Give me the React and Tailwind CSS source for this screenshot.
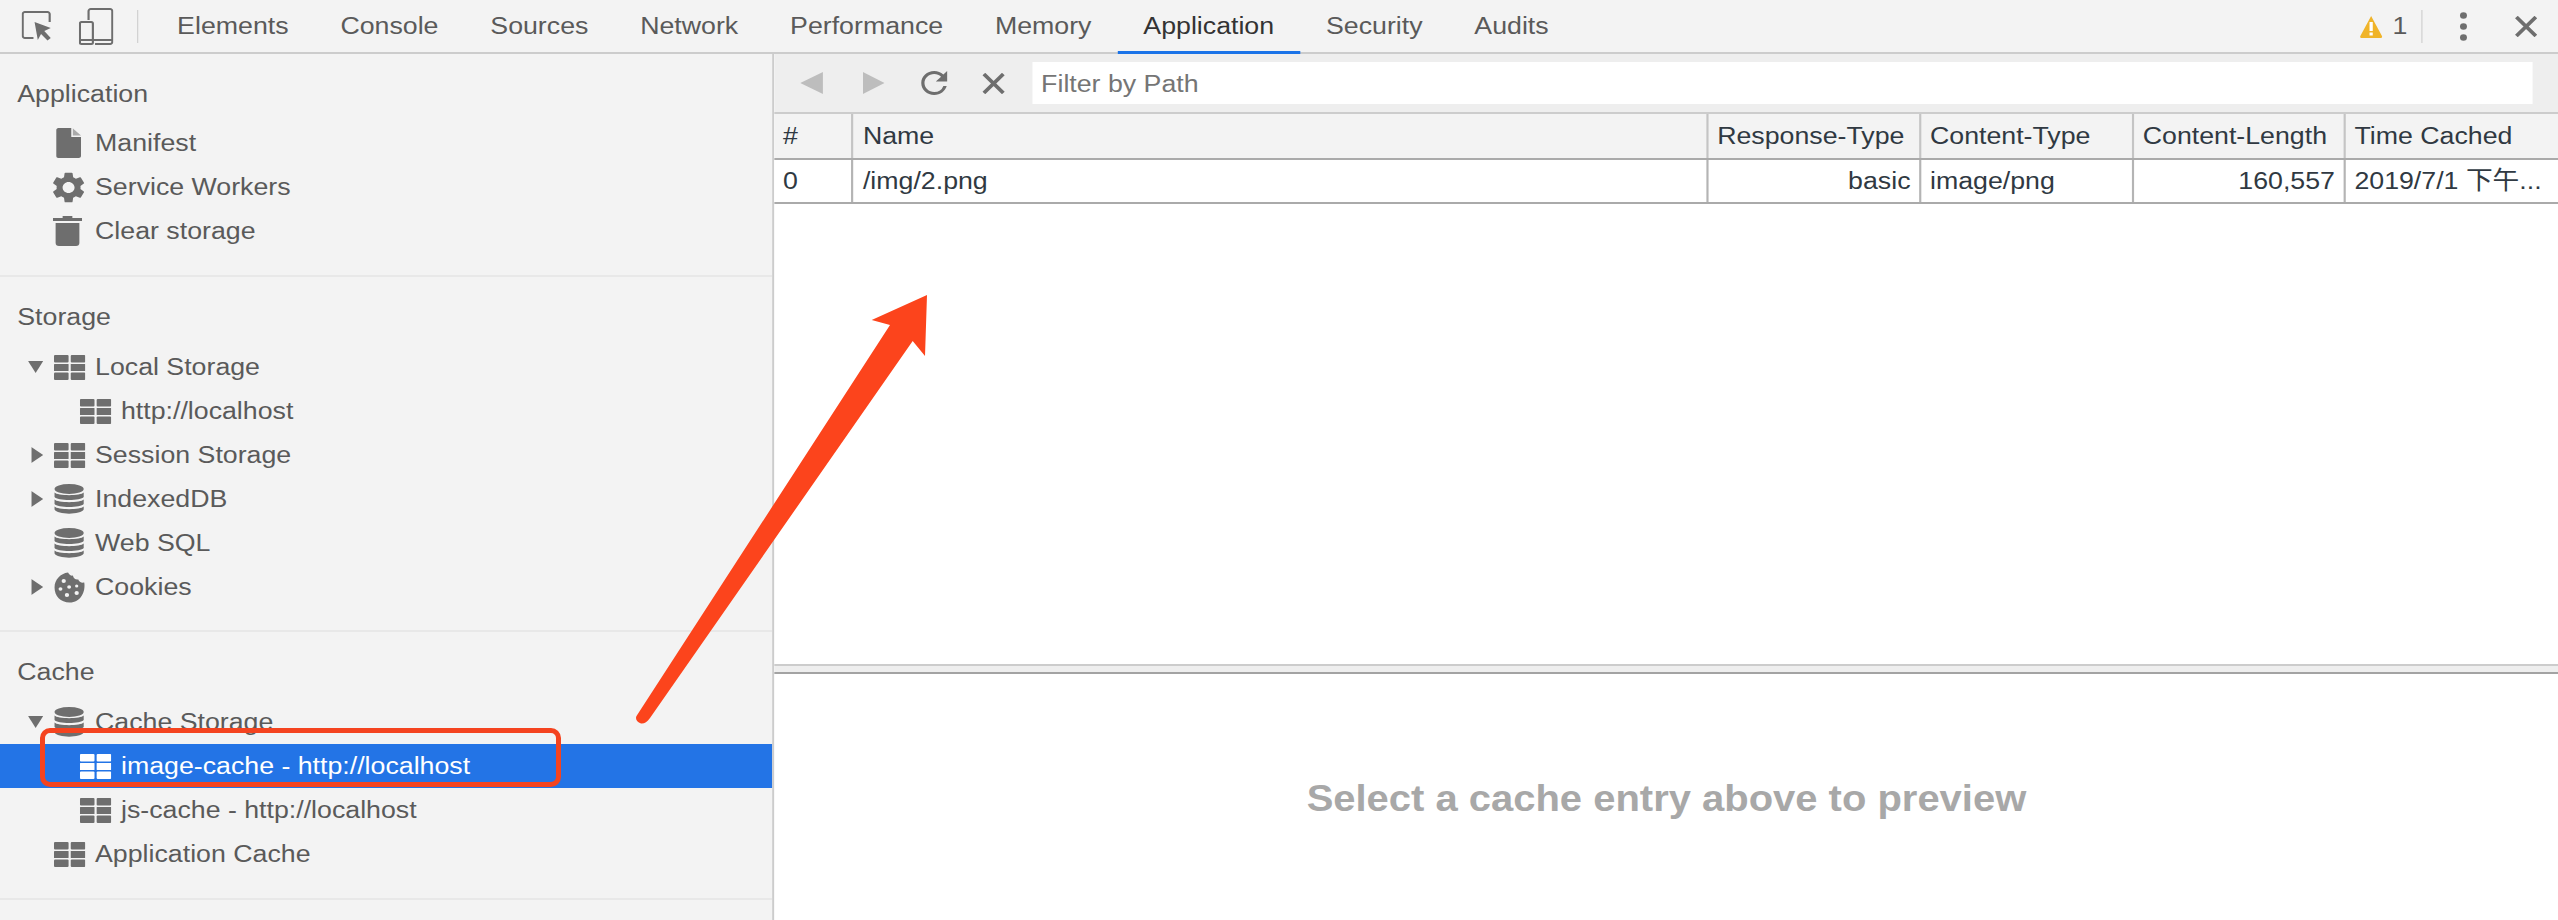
import { MdRefresh, MdSettings } from "react-icons/md";

const TABS = ["Elements", "Console", "Sources", "Network", "Performance", "Memory", "Application", "Security", "Audits"];

function GridIcon({ className = "text-[#6e6e6e]" }) {
  return (
    <svg width="29" height="25" viewBox="0 0 29 25" className={className} fill="currentColor">
      <rect x="0" y="0" width="13.5" height="7.5" rx="1" />
      <rect x="15.5" y="0" width="13.5" height="7.5" rx="1" />
      <rect x="0" y="9" width="13.5" height="7" rx="0.5" />
      <rect x="15.5" y="9" width="13.5" height="7" rx="0.5" />
      <rect x="0" y="17.5" width="13.5" height="7.5" rx="1" />
      <rect x="15.5" y="17.5" width="13.5" height="7.5" rx="1" />
    </svg>
  );
}

function DbIcon() {
  return (
    <svg width="28" height="30" viewBox="0 0 28 30" className="text-[#6e6e6e]" fill="currentColor">
      <ellipse cx="14" cy="5" rx="13.5" ry="5" />
      <path d="M0.5 8.5C3 12 25 12 27.500 8.500V13C25 17 3 17 0.500 13Z" />
      <path d="M0.5 15.500C3 19 25 19 27.500 15.500V20C25 24 3 24 0.500 20Z" />
      <path d="M0.5 22.500C3 26 25 26 27.500 22.500V25.500C25 31 3 31 0.500 25.500Z" />
    </svg>
  );
}

function CookieIcon() {
  return (
    <svg width="29" height="31" viewBox="0 0 29 31" className="text-[#6e6e6e]">
      <path
        fill="currentColor"
        d="M13 0.500C14 3 16 4 17.500 3.500C18 6.500 20 8 22.500 7.500C23 10 25.500 11 28 10.500C29.500 20 24.500 30.500 14.500 30.500C6 30.500 0.500 24 0.500 15.500C0.500 7.500 6 1.500 13 0.500Z"
      />
      <g fill="#f3f3f3">
        <circle cx="9" cy="9" r="2" />
        <circle cx="6" cy="17" r="1.800" />
        <circle cx="14" cy="15" r="1.800" />
        <circle cx="21" cy="14" r="1.500" />
        <circle cx="12" cy="23" r="2" />
        <circle cx="21" cy="21" r="2" />
      </g>
    </svg>
  );
}

function FileIcon() {
  return (
    <svg width="23" height="30" viewBox="0 0 23 30" className="text-[#6e6e6e]" fill="currentColor">
      <path d="M2 0H14V9H23V28C23 29 22 30 21 30H2C1 30 0 29 0 28V2C0 1 1 0 2 0Z" />
      <path d="M15.500 0.500L23 7.500H15.500Z" opacity="0.55" />
    </svg>
  );
}

function TrashIcon() {
  return (
    <svg width="27" height="30" viewBox="0 0 27 30" className="text-[#6e6e6e]" fill="currentColor">
      <path d="M9 0H18V2H27V5H0V2H9Z" />
      <path d="M2.500 7H24.500V27C24.500 28.800 23.300 30 21.500 30H5.500C3.700 30 2.500 28.800 2.500 27Z" />
    </svg>
  );
}

function Caret({ open }) {
  if (open) {
    return (
      <svg width="14" height="12" viewBox="0 0 14 12" className="ml-[2px] text-[#6e6e6e]" fill="currentColor">
        <path d="M0 0H14L7 12Z" />
      </svg>
    );
  }
  return (
    <svg width="11" height="16" viewBox="0 0 11 16" className="ml-[5px] text-[#6e6e6e]" fill="currentColor">
      <path d="M0 0L11 8L0 16Z" />
    </svg>
  );
}

function TreeRow({ depth = 1, caret, icon, label, selected = false }) {
  return (
    <div
      className={`flex h-[44px] items-center whitespace-nowrap ${depth === 2 ? "pl-12" : "pl-6"} ${
        selected ? "bg-[#2374e6] text-white" : ""
      }`}
    >
      <span className="flex w-[26px] shrink-0 items-center">
        {caret === "open" && <Caret open />}
        {caret === "closed" && <Caret />}
      </span>
      <span className="flex w-[38px] shrink-0 items-center">{icon}</span>
      <span>{label}</span>
    </div>
  );
}

function SideSection({ title, children, rowsClass = "mt-[6px] pb-[21px] border-b-2 border-[#e8e8e8]" }) {
  return (
    <section className="pt-[18px]">
      <div className="flex h-[44px] items-center pl-4">{title}</div>
      <div className={rowsClass}>{children}</div>
    </section>
  );
}

function Sidebar() {
  return (
    <aside className="h-full w-[717px] shrink-0 overflow-hidden border-r-2 border-[#cccccc] bg-[#f3f3f3]">
      <SideSection title="Application" rowsClass="mt-[5px] pb-[22px] border-b-2 border-[#e8e8e8]">
        <TreeRow icon={<span className="ml-[2px]"><FileIcon /></span>} label="Manifest" />
        <TreeRow icon={<MdSettings className="-ml-[5px] text-[#6e6e6e]" size={37} />} label="Service Workers" />
        <TreeRow icon={<span className="-ml-[1px]"><TrashIcon /></span>} label="Clear storage" />
      </SideSection>
      <SideSection title="Storage">
        <TreeRow caret="open" icon={<GridIcon />} label="Local Storage" />
        <TreeRow depth={2} icon={<GridIcon />} label="http://localhost" />
        <TreeRow caret="closed" icon={<GridIcon />} label="Session Storage" />
        <TreeRow caret="closed" icon={<DbIcon />} label="IndexedDB" />
        <TreeRow icon={<DbIcon />} label="Web SQL" />
        <TreeRow caret="closed" icon={<CookieIcon />} label="Cookies" />
      </SideSection>
      <SideSection title="Cache" rowsClass="mt-[6px] pb-[22px] border-b-2 border-[#e8e8e8]">
        <TreeRow caret="open" icon={<DbIcon />} label="Cache Storage" />
        <TreeRow depth={2} selected icon={<GridIcon className="text-white" />} label="image-cache - http://localhost" />
        <TreeRow depth={2} icon={<GridIcon />} label="js-cache - http://localhost" />
        <TreeRow icon={<GridIcon />} label="Application Cache" />
      </SideSection>
    </aside>
  );
}

function TopBar() {
  return (
    <header className="flex h-[54px] shrink-0 items-stretch border-b-2 border-[#cccccc] bg-[#f3f3f3] text-[#5a5a5a]">
      <div className="flex w-[140px] shrink-0 items-center pl-[20px]">
        <svg width="28" height="30" viewBox="0 0 28 30" fill="none">
          <path d="M11 27H3C2 27 1 26 1 25V3C1 2 2 1 3 1H24C25 1 26 2 26 3V11" stroke="#6e6e6e" strokeWidth="2" />
          <path d="M12 11L27 17L21 20L27 27L24 29.500L18 23L15 29Z" fill="#6e6e6e" />
        </svg>
        <svg width="32" height="37" viewBox="0 0 32 37" fill="none" className="ml-[25px]">
          <path d="M9 12V3C9 2 10 1 11 1H29C30 1 31 2 31 3V34C31 35 30 36 29 36H15" stroke="#6e6e6e" strokeWidth="2" />
          <rect x="1" y="14" width="12" height="22" rx="1.500" stroke="#6e6e6e" strokeWidth="2" />
          <path d="M1 32H13M13 32H31" stroke="#6e6e6e" strokeWidth="2" />
        </svg>
        <div className="ml-[22px] h-[33px] w-[1px] bg-[#cccccc]" />
      </div>
      {TABS.map((tab) => (
        <div
          key={tab}
          className={`-mb-[2px] flex items-center whitespace-nowrap border-b-[3px] px-6 ${
            tab === "Application" ? "border-[#1a73e8] text-[#333333]" : "border-transparent"
          }`}
        >
          {tab}
        </div>
      ))}
      <div className="ml-auto flex items-center pr-[19px]">
        <svg width="21" height="23" viewBox="0 0 21 23">
          <path d="M10.500 1L20.500 21C21 22 20.500 23 19.500 23H1.500C0.500 23 0 22 0.500 21Z" fill="#f0b429" />
          <rect x="9" y="7" width="3" height="9" fill="#fff" />
          <rect x="9" y="17.500" width="3" height="3" fill="#fff" />
        </svg>
        <span className="ml-[9px]">1</span>
        <div className="ml-[13px] h-[33px] w-[1px] bg-[#cccccc]" />
        <svg width="8" height="29" viewBox="0 0 8 29" className="ml-[34px]" fill="#6e6e6e">
          <circle cx="4" cy="3.500" r="3.200" />
          <circle cx="4" cy="14.500" r="3.200" />
          <circle cx="4" cy="25.500" r="3.200" />
        </svg>
        <svg width="22" height="21" viewBox="0 0 22 21" className="ml-[43px]" stroke="#6e6e6e" strokeWidth="3.500">
          <path d="M2 1L20 20M20 1L2 20" />
        </svg>
      </div>
    </header>
  );
}

function FilterBar() {
  return (
    <div className="flex h-[60px] shrink-0 items-center border-b-2 border-[#cccccc] bg-[#eeeeee] pl-[24px] pr-[24px]">
      <svg width="21" height="22" viewBox="0 0 21 22" fill="#bdbdbd">
        <path d="M21 0V22L0 11Z" />
      </svg>
      <svg width="20" height="22" viewBox="0 0 20 22" className="ml-[37px]" fill="#bdbdbd">
        <path d="M0 0V22L20 11Z" />
      </svg>
      <MdRefresh className="ml-[28px] text-[#6e6e6e]" size={36} />
      <svg width="22" height="21" viewBox="0 0 22 21" className="ml-[26px]" stroke="#6e6e6e" strokeWidth="3.500">
        <path d="M2 1L20 20M20 1L2 20" />
      </svg>
      <div className="ml-[25px] flex h-[42px] flex-1 items-center bg-white pl-2 pt-[1px] text-[#757575]">Filter by Path</div>
    </div>
  );
}

function CacheTable() {
  const cols = "grid grid-cols-[73px_792px_197px_197px_196px_1fr]";
  return (
    <div className="text-[#303942]">
      <div className={`${cols} h-[46px] border-b-2 border-[#aaaaaa] bg-[#f3f3f3]`}>
        <div className="flex items-center border-r-2 border-[#c4c4c4] pl-2">#</div>
        <div className="flex items-center border-r-2 border-[#c4c4c4] pl-[9px]">Name</div>
        <div className="flex items-center border-r-2 border-[#c4c4c4] pl-2">Response-Type</div>
        <div className="flex items-center border-r-2 border-[#c4c4c4] pl-2">Content-Type</div>
        <div className="flex items-center border-r-2 border-[#c4c4c4] pl-2">Content-Length</div>
        <div className="flex items-center pl-2">Time Cached</div>
      </div>
      <div className={`${cols} h-[44px] border-b-2 border-[#aaaaaa] bg-white`}>
        <div className="flex items-center border-r-2 border-[#b4b4b4] pl-2">0</div>
        <div className="flex items-center border-r-2 border-[#b4b4b4] pl-[9px]">/img/2.png</div>
        <div className="flex items-center justify-end border-r-2 border-[#b4b4b4] pr-2">basic</div>
        <div className="flex items-center border-r-2 border-[#b4b4b4] pl-2">image/png</div>
        <div className="flex items-center justify-end border-r-2 border-[#b4b4b4] pr-2">160,557</div>
        <div className="flex items-center overflow-hidden whitespace-nowrap pl-2">2019/7/1 下午...</div>
      </div>
    </div>
  );
}

function MainPanel() {
  return (
    <main className="flex h-full min-w-0 flex-1 flex-col bg-white">
      <FilterBar />
      <div className="h-[550px] shrink-0">
        <CacheTable />
      </div>
      <div className="h-[10px] shrink-0 border-y-2 border-t-[#cccccc] border-b-[#a3a3a3] bg-[#eeeeee]" />
      <div className="flex flex-1 items-center justify-center pt-[3px] text-[37px] font-bold text-[#a8a8a8]">
        Select a cache entry above to preview
      </div>
    </main>
  );
}

export default function App() {
  return (
    <div className="relative h-[920px] w-full overflow-hidden bg-white font-['Liberation_Sans','Noto_Sans_CJK_SC',sans-serif] text-[24.75px] text-[#5a5a5a]">
      <div className="flex h-[920px] w-[2369px] origin-top-left scale-x-[1.08] flex-col">
        <TopBar />
        <div className="flex min-h-0 flex-1">
          <Sidebar />
          <MainPanel />
        </div>
      </div>

      {/* annotation drawn over the screenshot */}
      <div className="absolute left-[40px] top-[728px] h-[59px] w-[521px] rounded-[10px] border-[5px] border-[#f4431f]" />
      <svg className="absolute left-0 top-0" width="2558" height="920" fill="#fc441c">
        <path d="M927 295L871.700 320L890 325L636.500 716C635 719 637 722 641 723.500C644 724 647 722 650 718L912.700 341L925 356Z" />
      </svg>
    </div>
  );
}
